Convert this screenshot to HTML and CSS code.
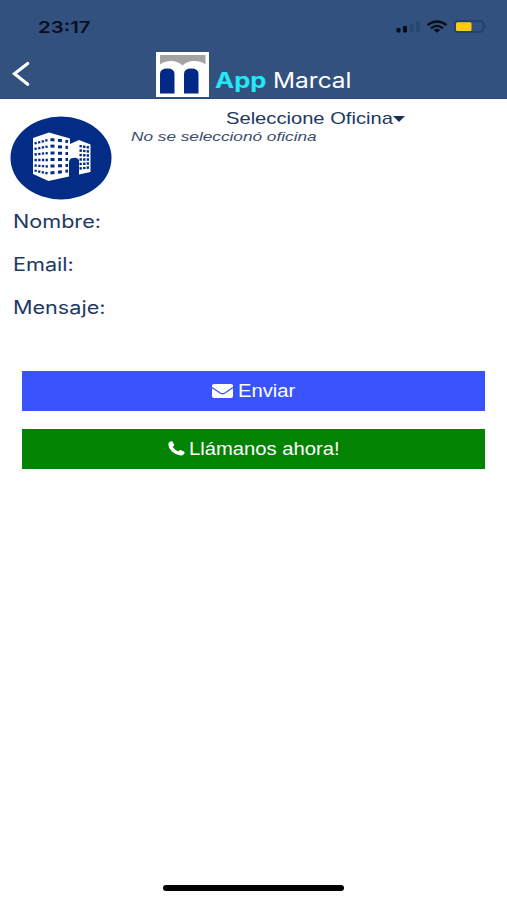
FILE: index.html
```html
<!DOCTYPE html>
<html lang="es">
<head>
<meta charset="utf-8">
<title>App Marcal</title>
<link rel="stylesheet" href="styles.css">
</head>
<body>
<header class="header">
  <div class="status">
    <span class="time wide">23:17</span>
    <svg class="status-icons" width="92" height="14" viewBox="0 0 92 14">
      <g fill="#080c14"><rect x="0.5" y="8" width="4" height="4.5" rx="1"/><rect x="7" y="6" width="4" height="6.5" rx="1"/></g>
      <g fill="#294775"><rect x="13.5" y="4" width="4" height="8.5" rx="1"/><rect x="20" y="1" width="4" height="11.5" rx="1"/></g>
      <g fill="none" stroke="#080c14" stroke-width="2.2"><path d="M31.5 5.2Q41 -2.2 50.500 5.2"/><path d="M35 8.300Q41 3.500 47 8.300"/></g>
      <path d="M37.800 10Q41 7.400 44.200 10L41 12.700Z" fill="#080c14"/>
      <rect x="58.700" y="1" width="28.500" height="11" rx="3" fill="none" stroke="#223e6a" stroke-width="1.300"/>
      <rect x="60" y="2.300" width="15.500" height="8.600" rx="1.500" fill="#ffcb0a"/>
      <path d="M88.600 4Q91.500 6.500 88.600 9Z" fill="#223e6a"/>
    </svg>
  </div>
  <div class="nav">
    <svg class="back" width="20" height="26" viewBox="0 0 20 26"><path d="M16.700 2.500L3.500 12.700L16.700 23.300" fill="none" stroke="#fff" stroke-width="3.200" stroke-linecap="round"/></svg>
    <svg class="logo" width="53" height="45" viewBox="0 0 53 45">
      <path fill="#fff" d="M0 0H53V45H0Z"/>
      <path fill="#a3a3a3" d="M4 3H49.500V12.500Q46 9 38 9Q31 9 26.500 13.500Q22 9 15 9Q8 9 4 12.500Z"/>
      <path fill="#032987" d="M4 41.500V22Q4 16.500 11.500 16.500Q18.500 16.500 18.500 22V41.500ZM28 41.500V22Q28 16.500 35.200 16.500Q42.500 16.500 42.500 22V41.500Z"/>
    </svg>
    <h1 class="title"><span class="app wide">App</span><span class="brand wide">Marcal</span></h1>
  </div>
</header>
<main>
  <section class="office">
    <svg class="office-icon" width="102" height="84" viewBox="0 0 102 84">
      <ellipse cx="51" cy="42" rx="50.500" ry="41.500" fill="#032c86"/>
      <path fill="#fff" d="M23 22L39 16.500L60 22.500V28L69 24L80.500 28.500V56L69 58.500V44Q67 41 63.500 42Q59 42 59 47V60.500L38.500 65L23 58Z"/>
      <g stroke="#032c86" fill="none">
        <path stroke-width="3" stroke-dasharray="4 3.500" d="M40.500 23.500L58 25.500M40.500 30L58 31.500M40.500 37L58 37.500M40.500 43.500H58M40.500 50L58 49.500M40.500 57L58 55"/>
        <path stroke-width="2.300" stroke-dasharray="2.300 1.400" d="M24.500 27.500L38 24M24.500 33L38 30.500M24.500 38.500L38 37M24.500 44H38M24.500 49.500L38 50.500M24.500 54.500L38 57.500"/>
        <path stroke-width="2.500" stroke-dasharray="2.400 1.200" d="M69.500 30L79 31.500M69.500 34.500L79 35.500M69.500 39L79 39.500M69.500 43.500H79M69.500 48L79 47.500M69.500 52.500L79 51.500"/>
      </g>
    </svg>
    <div class="office-text">
      <div class="select"><span class="select-label wide">Seleccione Oficina</span><i class="caret"></i></div>
      <div class="hint"><em class="wide">No se seleccionó oficina</em></div>
    </div>
  </section>
  <section class="fields">
    <label><span class="wide">Nombre:</span></label>
    <label><span class="wide">Email:</span></label>
    <label><span class="wide">Mensaje:</span></label>
  </section>
  <section class="actions">
    <button class="send">
      <svg width="21" height="14" viewBox="0 0 21 14"><rect width="21" height="14" rx="2" fill="#fff"/><path d="M0 3.500L8.500 9.200Q10.500 10.300 12.500 9.200L21 3.500" fill="none" stroke="#3b53fd" stroke-width="1.300"/></svg>
      <span class="wide">Enviar</span>
    </button>
    <button class="call">
      <svg width="17" height="15" viewBox="0 0 17 15"><path fill="#fff" d="M4.300 .2L6.200 3.800Q6.500 4.500 5.300 5.200Q4.500 5.700 4.900 6.200Q7 9 10 10.200Q10.700 10.400 11.300 9.500Q12 8.600 12.700 9L16.200 10.700Q16.900 11 16.400 12.500Q15.500 14.800 12.500 14.600Q8 14.200 4 10.500Q.3 7 .3 3.500Q.4 .3 4.300 .2Z"/></svg>
      <span class="wide">Llámanos ahora!</span>
    </button>
  </section>
</main>
<footer class="home"><div class="home-bar"></div></footer>
</body>
</html>
```
FILE: styles.css
```css
* { box-sizing: border-box; }
body {
  margin: 0;
  height: 900px;
  display: flex;
  flex-direction: column;
  background: #fefefe;
  color: #223862;
  font-family: Inter, "Liberation Sans", sans-serif;
  overflow: hidden;
}
.wide {
  display: inline-block;
  white-space: nowrap;
  transform: scaleX(var(--stretch, 1.2));
  transform-origin: left center;
}
.header {
  height: 98.500px;
  background: #32517f;
  border-bottom: 1px solid #2a4878;
}
.status {
  height: 52px;
  padding: 17px 19px 0 38px;
  display: flex;
  justify-content: space-between;
}
.time { --stretch: 1.235; font-size: 16.500px; line-height: 20px; font-weight: 600; color: #0a0f1b; }
.status-icons { margin: 3px 0 0; }
.nav { display: flex; height: 45px; }
.back { margin: 9px 0 0 11px; }
.logo { margin-left: 125px; }
.title { margin: 16px 0 0 6px; font-size: 21px; line-height: 26px; font-weight: 400; display: flex; }
.app { --stretch: 1.22; width: 57.500px; color: #21e9f6; font-weight: 700; }
.brand { --stretch: 1.165; color: #fff; }
.office { display: flex; height: 108px; padding: 17.500px 0 0 10px; }
.office-icon { flex: none; }
.office-text { margin: -8px 0 0 19px; font-family: "Liberation Sans", sans-serif; }
.select { --stretch: 1.185; display: flex; height: 20px; padding-left: 95px; font-size: 17px; line-height: 22px; }
.select-label { width: 167px; }
.caret { width: 0; height: 0; margin-top: 8px; border: 6px solid transparent; border-top-color: #17315f; border-bottom: 0; }
.hint { --stretch: 1.275; height: 16px; font-size: 13.500px; line-height: 17px; color: #3b4c6d; }
.fields { padding-left: 12.500px; height: 164.500px; }
.fields label { display: block; height: 43.200px; font-size: 18px; line-height: 29px; }
.actions { padding: 0 22px; display: grid; gap: 17.500px; }
button {
  --stretch: 1.155;
  height: 40px;
  padding: 0;
  border: 0;
  display: flex;
  align-items: center;
  color: #fff;
  font: 17.500px/24px "Liberation Sans", sans-serif;
}
.send { background: #3b53fd; padding-left: 190px; gap: 5px; }
.call { background: #048204; padding-left: 146px; gap: 4px; }
.home { margin-top: auto; height: 16px; display: flex; justify-content: center; }
.home-bar { width: 181px; height: 6px; border-radius: 3px; background: #000; margin-top: 1px; }
```
